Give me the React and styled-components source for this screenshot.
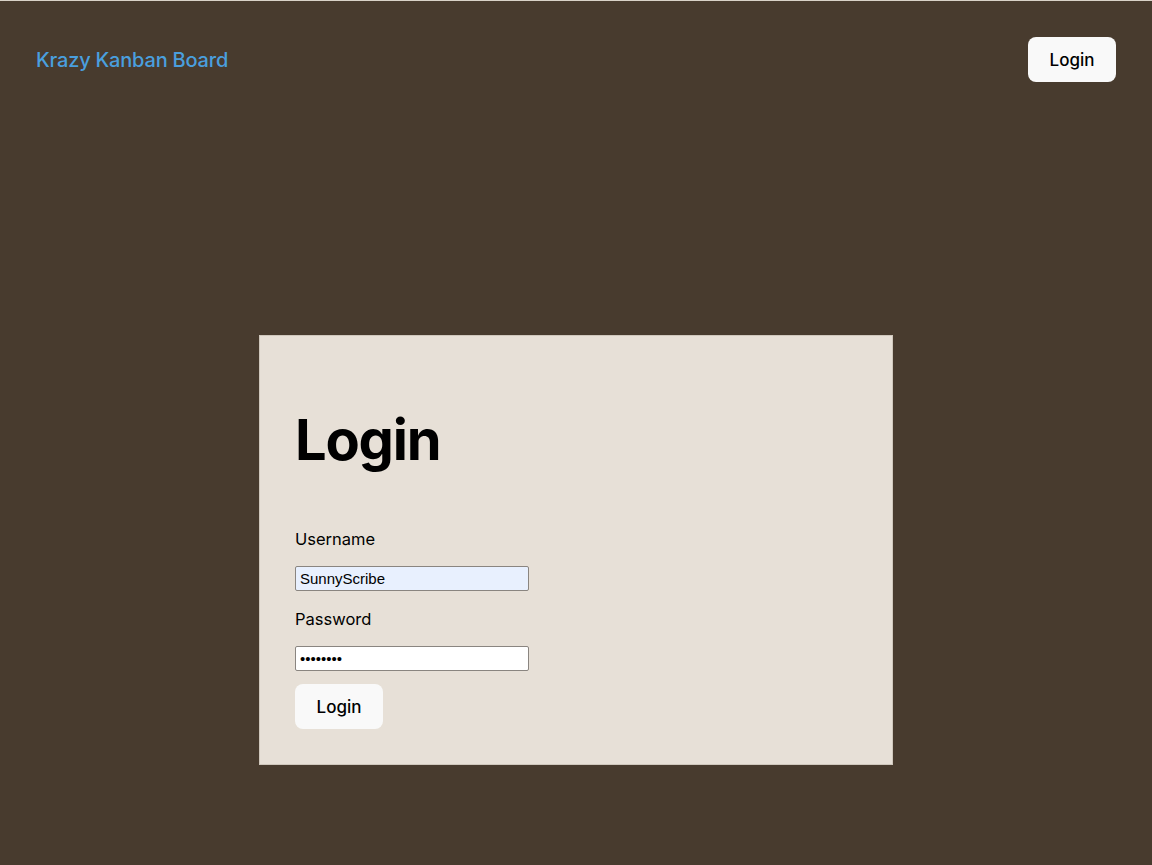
import React from "react";
import styled, { createGlobalStyle } from "styled-components";

const GlobalStyle = createGlobalStyle`
  html, body {
    margin: 0;
    padding: 0;
    background-color: #483b2e;
  }
  body {
    font-family: Inter, "Noto Sans", sans-serif;
    color: #000000;
    min-height: 865px;
    border-top: 1px solid #d9d2c8;
    box-sizing: border-box;
  }
`;

const Page = styled.div`
  display: flex;
  flex-direction: column;
  min-height: 864px;
`;

const NavBar = styled.nav`
  display: flex;
  justify-content: space-between;
  align-items: center;
  padding: 36px 36px 0 36px;
`;

const Brand = styled.h2`
  margin: 0;
  font-size: 20px;
  font-weight: 500;
  color: #4a9fde;
  letter-spacing: -0.2px;
`;

const Button = styled.button`
  font-family: Inter, "Noto Sans", sans-serif;
  font-size: 17px;
  font-weight: 500;
  color: #000000;
  background-color: #f9f9f9;
  border: 1px solid transparent;
  border-radius: 8px;
  width: 88px;
  height: 45px;
  padding: 0;
  cursor: pointer;
`;

const Main = styled.main`
  display: flex;
  justify-content: center;
  padding-top: 253px;
`;

const Card = styled.form`
  width: 634px;
  box-sizing: border-box;
  background-color: #e7e0d7;
  border: 1px solid #cfc7bc;
  padding: 76px 36px 35px 35px;
  display: flex;
  flex-direction: column;
  align-items: flex-start;
`;

const Heading = styled.h1`
  margin: 0 0 61px 0;
  font-size: 56px;
  font-weight: 700;
  line-height: 1;
  letter-spacing: -1.2px;
`;

const Label = styled.label`
  font-size: 16.5px;
  line-height: 20px;
  margin-bottom: 17px;
`;

const Input = styled.input`
  width: 234px;
  height: 25px;
  box-sizing: border-box;
  padding: 1px 4px;
  margin-bottom: ${(p) => p.$gap}px;
  font-family: "Liberation Sans", Arial, sans-serif;
  font-size: 15px;
  color: #000000;
  background-color: ${(p) => (p.$filled ? "#e8f0fe" : "#ffffff")};
  border: 1px solid #8a8580;
  border-radius: 2px;
  outline: none;
`;

export default function App() {
  return (
    <>
      <GlobalStyle />
      <Page>
        <NavBar>
          <Brand>Krazy Kanban Board</Brand>
          <Button type="button">Login</Button>
        </NavBar>
        <Main>
          <Card onSubmit={(e) => e.preventDefault()}>
            <Heading>Login</Heading>
            <Label htmlFor="username">Username</Label>
            <Input
              id="username"
              type="text"
              defaultValue="SunnyScribe"
              $filled
              $gap={18}
            />
            <Label htmlFor="password">Password</Label>
            <Input
              id="password"
              type="password"
              defaultValue="password"
              $gap={13}
            />
            <Button type="submit">Login</Button>
          </Card>
        </Main>
      </Page>
    </>
  );
}
